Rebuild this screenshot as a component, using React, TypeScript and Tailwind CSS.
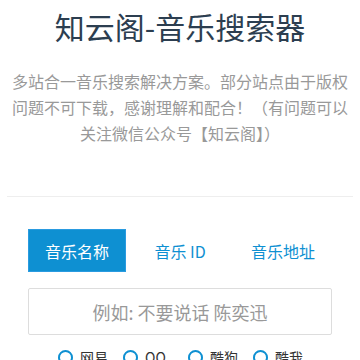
import React from "react";

const FONT = { fontFamily: '"Noto Sans CJK SC", "Noto Sans", sans-serif' };

export default function App() {
  const tabs = ["音乐名称", "音乐 ID", "音乐地址"];
  const sources = ["网易", "QQ", "酷狗", "酷我"];
  return (
    <div className="w-[360px] h-[360px] overflow-hidden bg-white" style={FONT}>
      <h1 className="pt-[6px] text-center text-[30px] leading-[40px] font-normal text-[#2c3e50]">
        知云阁-音乐搜索器
      </h1>
      <p className="mt-[22px] px-[10px] text-center text-[16px] leading-[26px] text-[#999]">
        多站合一音乐搜索解决方案。部分站点由于版权问题不可下载，感谢理解和配合！（有问题可以关注微信公众号【知云阁】）
      </p>
      <div className="mx-[7px] mt-[50px] border-t border-[#eeeeee]" />
      <div className="mx-[28px] mt-[32px] flex gap-[5px]">
        {tabs.map((t, i) => (
          <div
            key={t}
            className={
              i === 0
                ? "flex h-[43px] w-[99px] items-center justify-center border border-[#2a9be0] bg-[#0e90d2] text-[16px] text-white"
                : "flex h-[43px] w-[99px] items-center justify-center text-[16px] text-[#0e90d2]"
            }
          >
            {t}
          </div>
        ))}
      </div>
      <div className="mx-[28px] mt-[16px]">
        <input
          className="h-[47px] w-full rounded-[2px] border border-[#dddddd] text-center text-[18px] text-[#555] outline-none placeholder:text-[#999]"
          style={FONT}
          placeholder="例如: 不要说话 陈奕迅"
        />
      </div>
      <div className="mt-[15px] flex pl-[58px]">
        {sources.map((s) => (
          <div key={s} className="flex w-[65px] items-start gap-[7px]">
            <span className="h-[15px] w-[15px] shrink-0 rounded-full border-2 border-[#0e90d2]" />
            <span className="text-[14px] leading-[15px] text-[#333]">{s}</span>
          </div>
        ))}
      </div>
    </div>
  );
}
